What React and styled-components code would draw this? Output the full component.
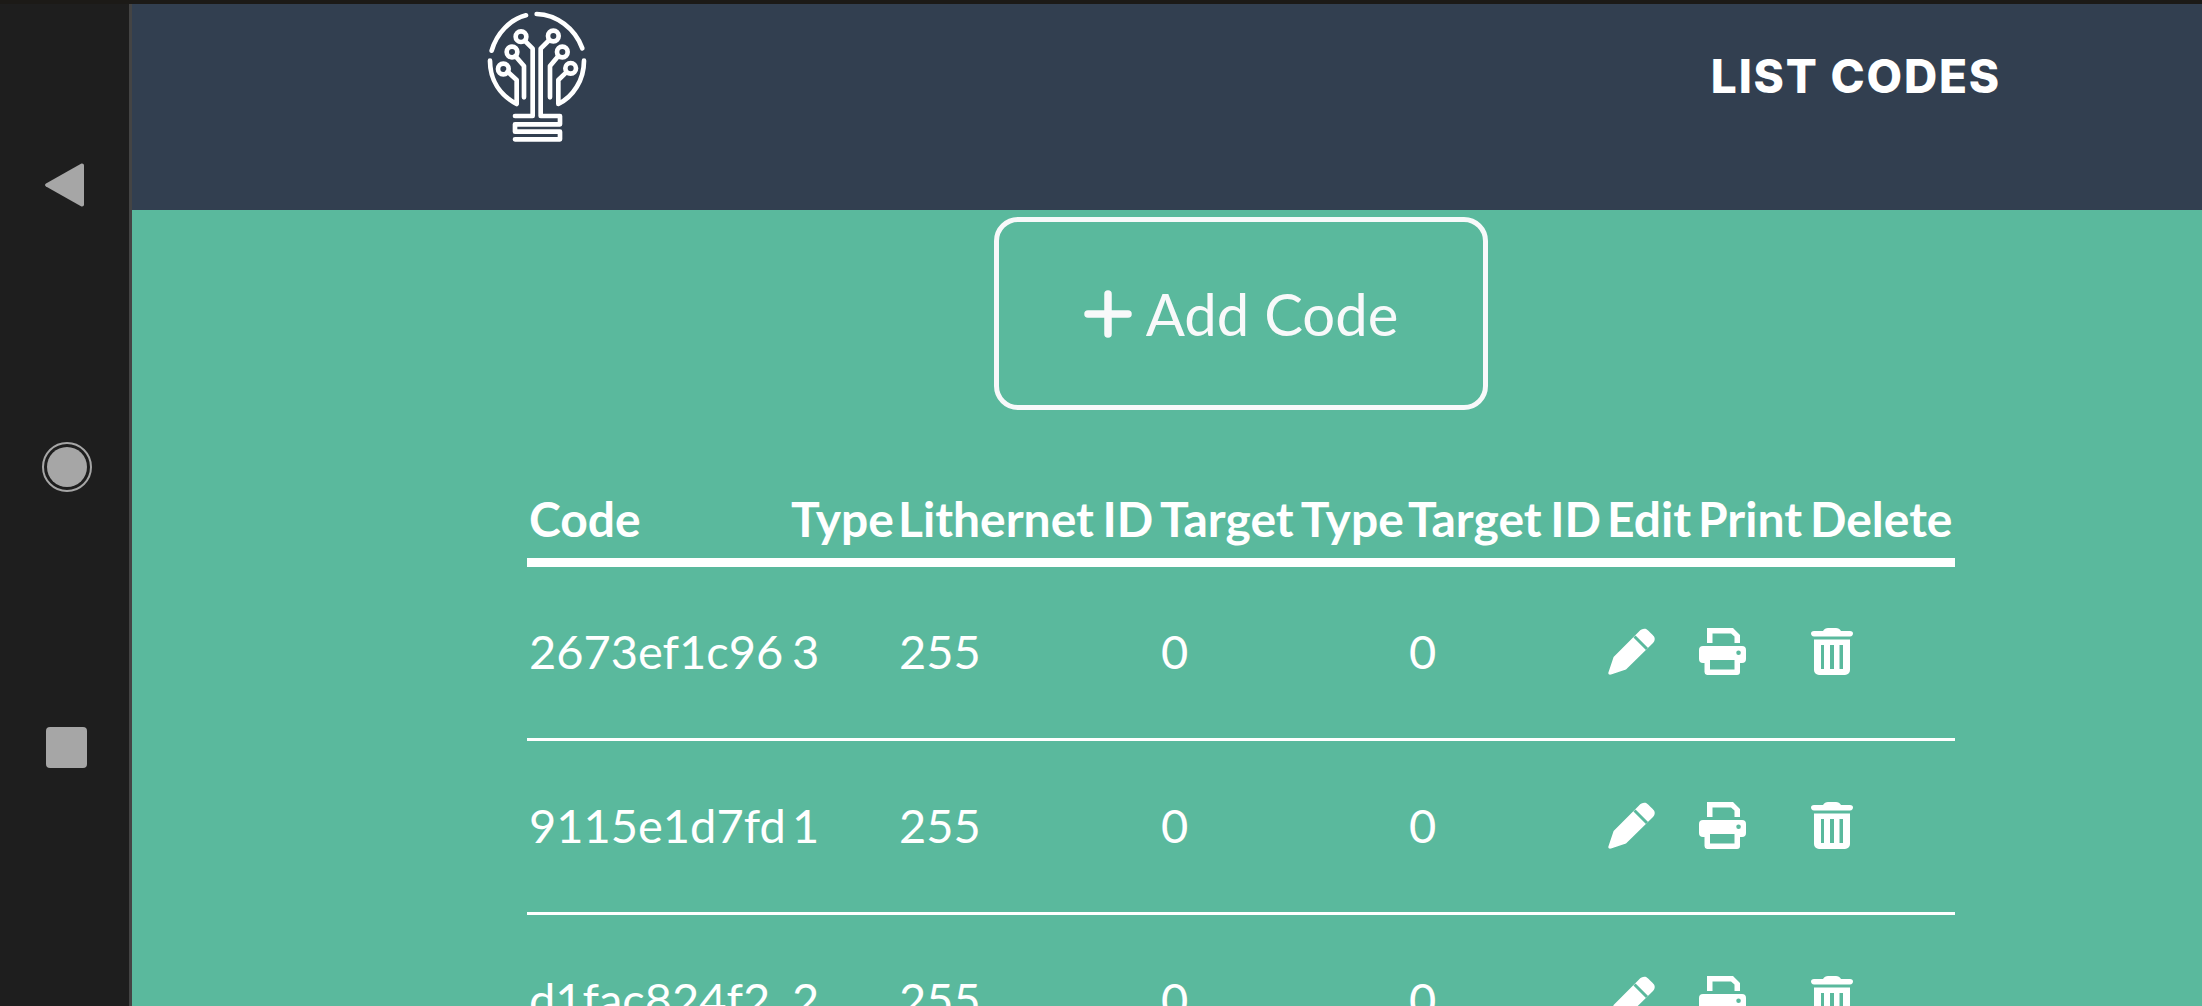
import React from "react";
import styled, { createGlobalStyle } from "styled-components";

const Global = createGlobalStyle`
  html, body { margin: 0; padding: 0; height: 100%; overflow: hidden; background: #5ab99d; }
  #root { height: 100%; }
`;

const Screen = styled.div`
  display: flex;
  flex-direction: column;
  width: 2202px;
  height: 1006px;
  overflow: hidden;
  font-family: "Lato", "Liberation Sans", sans-serif;
  color: #fff;
`;
const StatusEdge = styled.div`
  height: 4px;
  flex: none;
  background: #1c1a17;
`;
const Body = styled.div`
  display: flex;
  flex: 1;
  min-height: 0;
`;
const NavBar = styled.nav`
  flex: none;
  box-sizing: border-box;
  width: 132px;
  padding: 159px 0 0 45px;
  display: flex;
  flex-direction: column;
  gap: 235px;
  background: #1e1e1e;
  border-right: 3px solid #444;
`;
const NavIcon = styled.svg`
  display: block;
  flex: none;
  overflow: visible;
`;
const Main = styled.main`
  flex: 1;
  min-width: 0;
  display: flex;
  flex-direction: column;
`;
const Header = styled.header`
  flex: none;
  box-sizing: border-box;
  height: 206px;
  display: flex;
  justify-content: space-between;
  align-items: flex-start;
  padding: 0 201px 0 308px;
  background: #323f50;
`;
const Logo = styled.svg`
  display: block;
  width: 180px;
  height: 156px;
`;
const Title = styled.h1`
  margin: 46px 0 0;
  font-family: "Inter", "Liberation Sans", sans-serif;
  font-weight: 800;
  font-size: 46px;
  line-height: 52px;
  letter-spacing: 1.8px;
  white-space: nowrap;
`;
const Content = styled.div`
  width: 1428px;
  margin-left: 395px;
  display: flex;
  flex-direction: column;
  align-items: center;
`;
const AddButton = styled.button`
  box-sizing: border-box;
  width: 494px;
  height: 193px;
  margin: 7px 1px 0 0;
  padding: 0 0 0 1px;
  flex: none;
  display: flex;
  align-items: center;
  justify-content: center;
  gap: 14px;
  background: transparent;
  border: 5px solid #f8f9fa;
  border-radius: 24px;
  color: #f8f9fa;
  font-family: inherit;
  font-size: 58px;
  font-weight: 400;
`;
const Table = styled.table`
  width: 1428px;
  margin-top: 60px;
  table-layout: fixed;
  border-collapse: separate;
  border-spacing: 0;
`;
const HeadCell = styled.th`
  box-sizing: border-box;
  height: 97px;
  padding: 8px 0 0 3px;
  text-align: left;
  font-size: 48px;
  font-weight: 700;
  word-spacing: -3px;
  white-space: nowrap;
  border-bottom: 9px solid #fff;
  &:first-child { padding-left: 2px; }
`;
const Row = styled.tr`
  height: 174px;
`;
const Cell = styled.td`
  box-sizing: border-box;
  padding: 0 0 3px 4px;
  font-size: 47px;
  font-weight: 400;
  white-space: nowrap;
  vertical-align: middle;
  border-bottom: 3px solid #fff;
  &:first-child { padding-left: 2px; }
`;
const ActionIcon = styled.svg`
  display: block;
  width: 47px;
  height: 47px;
  fill: #fff;
`;

const cols = [261, 107, 262, 248, 199, 91, 112, 148];
const heads = ["Code", "Type", "Lithernet ID", "Target Type", "Target ID", "Edit", "Print", "Delete"];
const rows = [
  ["2673ef1c96", "3"],
  ["9115e1d7fd", "1"],
  ["d1fac824f2", "2"],
];

const Pen = () => (
  <ActionIcon viewBox="0 0 47 47">
    <path d="M.4 44.5 5.6 29 31 3.4C33 1.2 36 .2 38.500 1.200 41 3 43.800 6 46 8.400 47.500 11 46.500 13.500 44.500 15.500L18 41.500 3 46.600C1 47 0 46 .4 44.500Z" />
    <path d="M26.500 8.500 39 21" stroke="#5ab99d" strokeWidth="3" fill="none" />
  </ActionIcon>
);
const Printer = () => (
  <ActionIcon viewBox="0 0 47 47">
    <path fillRule="evenodd" d="M8 0H34L41 7V15H35.500V8.500L32 5.500H13.500V15H8V3Z" />
    <path fillRule="evenodd" d="M4 18H43A4 4 0 0 1 47 22V31A4 4 0 0 1 43 35H41V44A3 3 0 0 1 38 47H8A3 3 0 0 1 5.500 44V35H4A4 4 0 0 1 0 31V22A4 4 0 0 1 4 18ZM39.500 22.500A2.300 2.300 0 1 0 39.600 27.100 2.300 2.300 0 0 0 39.500 22.500ZM11 32V41.500H35.500V32Z" />
  </ActionIcon>
);
const Trash = () => (
  <ActionIcon viewBox="0 0 42 47" preserveAspectRatio="xMinYMid meet">
    <path d="M12 3C13 1 15 0 17 0H25C27 0 29 1 30 3H39C41 3 42 4 42 5.500 42 7 41 8.500 39 8.500H3C1 8.500 0 7 0 5.500 0 4 1 3 3 3Z" />
    <path fillRule="evenodd" d="M3 11.500H39V42A5 5 0 0 1 34 47H8A5 5 0 0 1 3 42ZM10 17V41H13V17ZM19 17V41H23V17ZM28.500 17V41H32V17Z" />
  </ActionIcon>
);

const Plus = () => (
  <svg width="48" height="48" viewBox="0 0 48 48" fill="none" stroke="#f8f9fa" strokeWidth="7.500" strokeLinecap="round">
    <path d="M24 4V44M4 24H44" />
  </svg>
);

export default function App() {
  return (
    <Screen>
      <Global />
      <StatusEdge />
      <Body>
        <NavBar>
          <NavIcon width="39" height="44" viewBox="0 0 39 44">
            <path d="M1 20.500 36 .8C37.500 0 39 1 39 2.500V41.500C39 43 37.500 44 36 43.200L1 23.500C-.3 22.700-.3 21.300 1 20.500Z" fill="#a6a6a6" />
          </NavIcon>
          <NavIcon width="50" height="50" viewBox="0 0 50 50" style={{ marginLeft: -3 }}>
            <circle cx="25" cy="25" r="24" fill="none" stroke="#a6a6a6" strokeWidth="2" />
            <circle cx="25" cy="25" r="20" fill="#a6a6a6" />
          </NavIcon>
          <NavIcon width="41" height="41" viewBox="0 0 41 41" style={{ marginLeft: 1 }}>
            <rect width="41" height="41" rx="4" fill="#a6a6a6" />
          </NavIcon>
        </NavBar>
        <Main>
          <Header>
            <Logo viewBox="0 12 540 468" fill="none" stroke="#fff" strokeWidth="14" strokeLinecap="round" strokeLinejoin="round">
              <path d="M155 152C170 100 210 58 258 46" />
              <path d="M290 42C350 44 405 85 427 145" />
              <path d="M150 182C150 240 180 285 230 312V240L203 215" />
              <circle cx="190" cy="207" r="16" />
              <circle cx="216" cy="156" r="16" />
              <path d="M226 168 252 198V292" />
              <circle cx="243" cy="110" r="16" />
              <path d="M254 122 278 146V348H225" />
              <circle cx="340" cy="108" r="16" />
              <path d="M328 120 302 146V348H360V373H225V395H360V418H225" />
              <circle cx="367" cy="156" r="16" />
              <path d="M355 168 330 198V292" />
              <circle cx="392" cy="205" r="16" />
              <path d="M378 218 355 240V312C400 290 432 240 432 182" />
            </Logo>
            <Title>LIST CODES</Title>
          </Header>
          <Content>
            <AddButton>
              <Plus />
              Add Code
            </AddButton>
            <Table>
              <colgroup>
                {cols.map((w, i) => (
                  <col key={i} width={w} />
                ))}
              </colgroup>
              <thead>
                <tr>
                  {heads.map((h) => (
                    <HeadCell key={h}>{h}</HeadCell>
                  ))}
                </tr>
              </thead>
              <tbody>
                {rows.map(([code, type]) => (
                  <Row key={code}>
                    <Cell>{code}</Cell>
                    <Cell>{type}</Cell>
                    <Cell>255</Cell>
                    <Cell>0</Cell>
                    <Cell>0</Cell>
                    <Cell><Pen /></Cell>
                    <Cell><Printer /></Cell>
                    <Cell><Trash /></Cell>
                  </Row>
                ))}
              </tbody>
            </Table>
          </Content>
        </Main>
      </Body>
    </Screen>
  );
}
